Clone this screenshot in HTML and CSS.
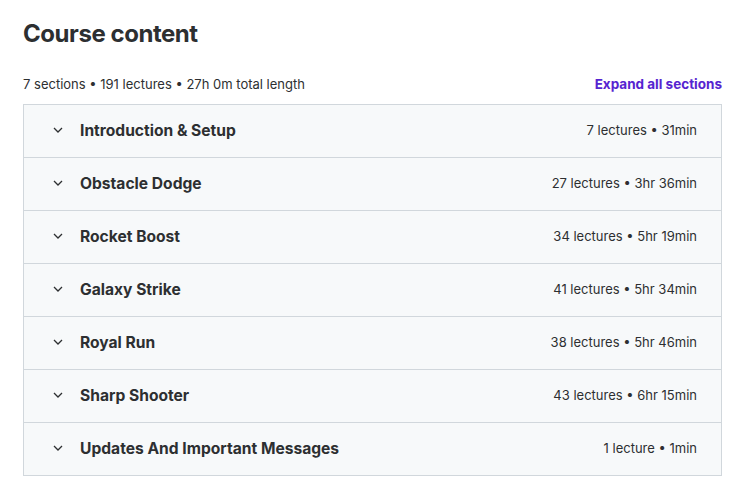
FILE: index.html
```html
<!DOCTYPE html>
<html>
<head>
<meta charset="utf-8">
<link rel="stylesheet" href="styles.css">
</head>
<body>
<div class="page">
  <h2 class="title">Course content</h2>
  <div class="meta">
    <span class="summary">7 sections • 191 lectures • 27h 0m total length</span>
    <span class="expand">Expand all sections</span>
  </div>
  <div class="sections">
    <div class="row"><svg class="chev" viewBox="0 0 10 6"><path d="M1 1l4 4 4-4" fill="none" stroke="#2d2f31" stroke-width="1.3"/></svg><span class="name">Introduction &amp; Setup</span><span class="info">7 lectures • 31min</span></div>
    <div class="row"><svg class="chev" viewBox="0 0 10 6"><path d="M1 1l4 4 4-4" fill="none" stroke="#2d2f31" stroke-width="1.3"/></svg><span class="name">Obstacle Dodge</span><span class="info">27 lectures • 3hr 36min</span></div>
    <div class="row"><svg class="chev" viewBox="0 0 10 6"><path d="M1 1l4 4 4-4" fill="none" stroke="#2d2f31" stroke-width="1.3"/></svg><span class="name">Rocket Boost</span><span class="info">34 lectures • 5hr 19min</span></div>
    <div class="row"><svg class="chev" viewBox="0 0 10 6"><path d="M1 1l4 4 4-4" fill="none" stroke="#2d2f31" stroke-width="1.3"/></svg><span class="name">Galaxy Strike</span><span class="info">41 lectures • 5hr 34min</span></div>
    <div class="row"><svg class="chev" viewBox="0 0 10 6"><path d="M1 1l4 4 4-4" fill="none" stroke="#2d2f31" stroke-width="1.3"/></svg><span class="name">Royal Run</span><span class="info">38 lectures • 5hr 46min</span></div>
    <div class="row"><svg class="chev" viewBox="0 0 10 6"><path d="M1 1l4 4 4-4" fill="none" stroke="#2d2f31" stroke-width="1.3"/></svg><span class="name">Sharp Shooter</span><span class="info">43 lectures • 6hr 15min</span></div>
    <div class="row"><svg class="chev" viewBox="0 0 10 6"><path d="M1 1l4 4 4-4" fill="none" stroke="#2d2f31" stroke-width="1.3"/></svg><span class="name">Updates And Important Messages</span><span class="info">1 lecture • 1min</span></div>
  </div>
</div>
</body>
</html>
```
FILE: styles.css
```css
* { box-sizing: border-box; }
html, body { margin: 0; padding: 0; background: #fff; }
body { font-family: Inter, "Liberation Sans", sans-serif; color: #2d2f31; }
.page { padding: 20px 29px 0 23px; }
.title { margin: 0; font-size: 24px; font-weight: 700; line-height: 28px; letter-spacing: -0.45px; }
.meta { display: flex; justify-content: space-between; align-items: center; margin-top: 24px; height: 24px; }
.summary { font-size: 13px; }
.expand { font-size: 13.5px; font-weight: 700; color: #5624d0; }
.sections { margin-top: 8px; border: 1px solid #d1d7dc; }
.row { display: flex; align-items: center; height: 53px; padding: 0 24px 2px 29px; background: #f7f9fa; border-top: 1px solid #d1d7dc; }
.row:first-child { border-top: none; height: 52px; }
.chev { width: 10px; height: 6px; margin-right: 17px; }
.name { font-size: 15.6px; font-weight: 700; flex: 1; }
.info { font-size: 13px; }
```
